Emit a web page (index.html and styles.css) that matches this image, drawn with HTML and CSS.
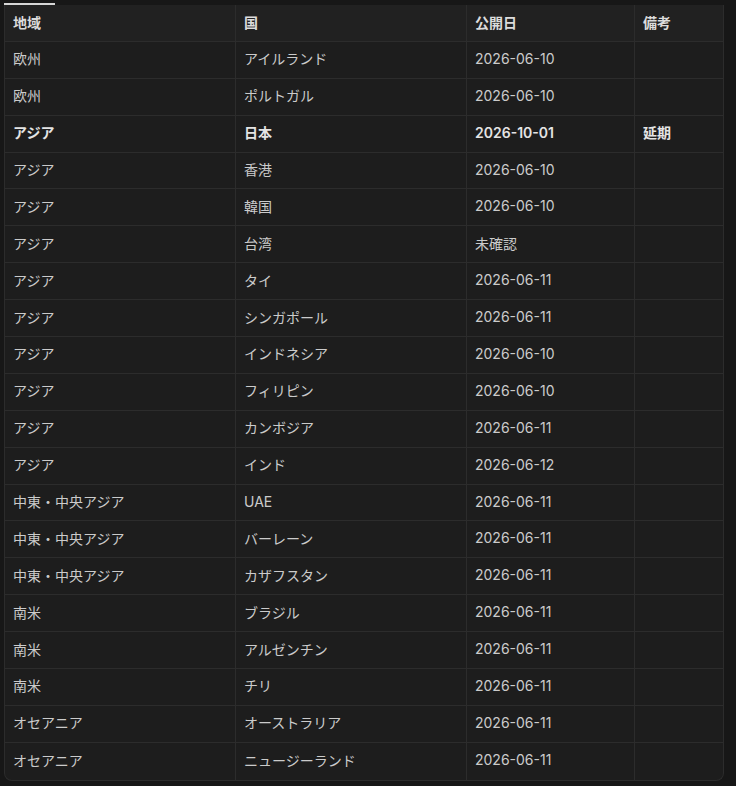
FILE: index.html
```html
<!DOCTYPE html>
<html lang="ja">
<head>
<meta charset="utf-8">
<link rel="stylesheet" href="styles.css">
</head>
<body>
<div class="page">
  <div class="tab-indicator"></div>
  <div class="table">
    <div class="cell head">地域</div><div class="cell head">国</div><div class="cell head">公開日</div><div class="cell head">備考</div>
    <div class="cell">欧州</div><div class="cell">アイルランド</div><div class="cell">2026-06-10</div><div class="cell"></div>
    <div class="cell">欧州</div><div class="cell">ポルトガル</div><div class="cell">2026-06-10</div><div class="cell"></div>
    <div class="cell strong">アジア</div><div class="cell strong">日本</div><div class="cell strong">2026-10-01</div><div class="cell strong">延期</div>
    <div class="cell">アジア</div><div class="cell">香港</div><div class="cell">2026-06-10</div><div class="cell"></div>
    <div class="cell">アジア</div><div class="cell">韓国</div><div class="cell">2026-06-10</div><div class="cell"></div>
    <div class="cell">アジア</div><div class="cell">台湾</div><div class="cell">未確認</div><div class="cell"></div>
    <div class="cell">アジア</div><div class="cell">タイ</div><div class="cell">2026-06-11</div><div class="cell"></div>
    <div class="cell">アジア</div><div class="cell">シンガポール</div><div class="cell">2026-06-11</div><div class="cell"></div>
    <div class="cell">アジア</div><div class="cell">インドネシア</div><div class="cell">2026-06-10</div><div class="cell"></div>
    <div class="cell">アジア</div><div class="cell">フィリピン</div><div class="cell">2026-06-10</div><div class="cell"></div>
    <div class="cell">アジア</div><div class="cell">カンボジア</div><div class="cell">2026-06-11</div><div class="cell"></div>
    <div class="cell">アジア</div><div class="cell">インド</div><div class="cell">2026-06-12</div><div class="cell"></div>
    <div class="cell">中東・中央アジア</div><div class="cell">UAE</div><div class="cell">2026-06-11</div><div class="cell"></div>
    <div class="cell">中東・中央アジア</div><div class="cell">バーレーン</div><div class="cell">2026-06-11</div><div class="cell"></div>
    <div class="cell">中東・中央アジア</div><div class="cell">カザフスタン</div><div class="cell">2026-06-11</div><div class="cell"></div>
    <div class="cell">南米</div><div class="cell">ブラジル</div><div class="cell">2026-06-11</div><div class="cell"></div>
    <div class="cell">南米</div><div class="cell">アルゼンチン</div><div class="cell">2026-06-11</div><div class="cell"></div>
    <div class="cell">南米</div><div class="cell">チリ</div><div class="cell">2026-06-11</div><div class="cell"></div>
    <div class="cell">オセアニア</div><div class="cell">オーストラリア</div><div class="cell">2026-06-11</div><div class="cell"></div>
    <div class="cell last">オセアニア</div><div class="cell last">ニュージーランド</div><div class="cell last">2026-06-11</div><div class="cell last"></div>
  </div>
</div>
</body>
</html>
```
FILE: styles.css
```css
html, body {
  margin: 0;
  padding: 0;
  background: #171717;
}
body {
  font-family: Inter, "Noto Sans CJK JP", sans-serif;
  font-size: 14px;
  color: #cbcbcb;
}
.page {
  padding: 3px 0 0 4px;
}
.tab-indicator {
  width: 51px;
  height: 2px;
  background: #d6d6d6;
}
.table {
  width: 720px;
  box-sizing: border-box;
  display: grid;
  grid-template-columns: 231px 231px 168px 88px;
  grid-auto-rows: 36.9px;
  background: #1d1d1d;
  border: 1px solid #2c2c2c;
  border-top: none;
  border-radius: 0 0 8px 8px;
  overflow: hidden;
}
.cell {
  box-sizing: border-box;
  padding: 0 8px 3px;
  display: flex;
  align-items: center;
  border-right: 1px solid #2c2c2c;
  border-bottom: 1px solid #2c2c2c;
  white-space: nowrap;
}
.cell:nth-child(4n+1) {
  font-family: "Noto Sans CJK JP", sans-serif;
}
.cell:nth-child(4n) {
  border-right: none;
}
.cell.last {
  border-bottom: none;
}
.head {
  padding-bottom: 1px;
  background: #212121;
  font-weight: 700;
  color: #dcdcdc;
}
.strong {
  font-weight: 600;
  color: #e4e4e4;
}
```
